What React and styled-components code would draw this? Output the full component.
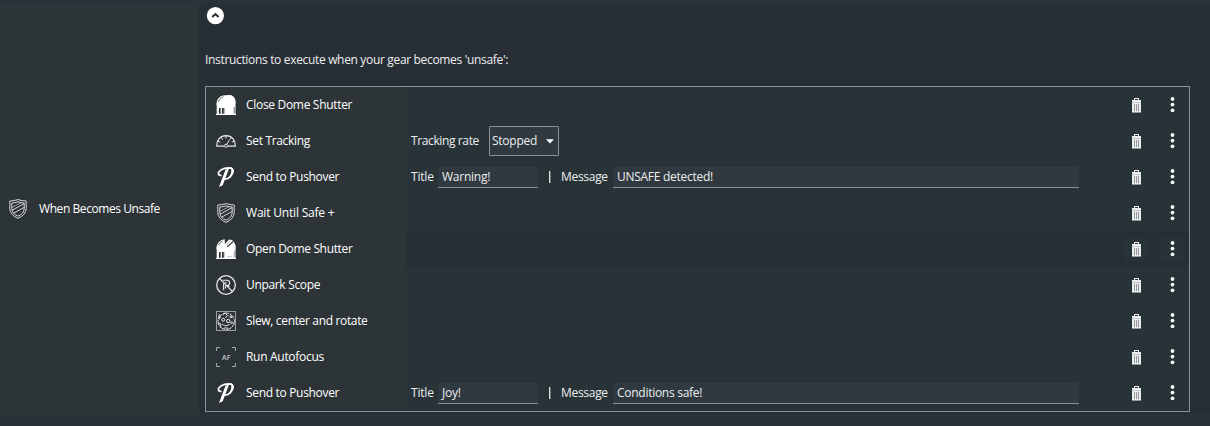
import React from 'react';
import styled, { createGlobalStyle } from 'styled-components';

const GlobalStyle = createGlobalStyle`
  * { box-sizing: border-box; }
  body {
    margin: 0;
    background: #283339;
    color: #fff;
    font: 12px/16px "Open Sans", "Noto Sans", sans-serif;
    overflow: hidden;
  }
`;

const Page = styled.div`
  width: 1210px;
  height: 426px;
  padding: 4px 0 12px;
  display: flex;
  background: #273239;
`;
const Trigger = styled.aside`
  width: 199px;
  flex: none;
  display: flex;
  align-items: center;
  padding: 0 0 0 8px;
  gap: 11px;
  background: #2d3437;
`;
const Content = styled.main`
  flex: 1;
  display: flex;
  flex-direction: column;
  align-items: flex-start;
  padding: 3px 20px 0 6px;
  background: #282e36;
`;
const Collapse = styled.button`
  width: 18px;
  height: 18px;
  margin: 0 0 27px 1px;
  padding: 0;
  border: 0;
  background: none;
  svg { display: block; }
`;
const Text = styled.span`
  display: block;
  flex: none;
  white-space: nowrap;
  color: ${(p) => (p.$soft ? '#eceeef' : '#fff')};
  letter-spacing: ${(p) => p.$ls ?? -0.3}px;
`;
const Intro = styled(Text)`
  margin-bottom: 18px;
`;
const List = styled.section`
  width: 985px;
  height: 326px;
  border: 1px solid #8c9194;
`;
const Row = styled.div`
  height: 36px;
  display: flex;
  background: ${(p) => (p.$dim ? '#282e36' : '#283338')};
`;
const Label = styled.div`
  width: 200px;
  flex: none;
  display: flex;
  align-items: center;
  gap: 10px;
  padding-left: 10px;
  background: #2d3437;
  box-shadow: inset 0 -1px #2a3237;
`;
const Body = styled.div`
  flex: 1;
  display: flex;
  align-items: center;
  padding-left: 5px;
`;
const Fixed = styled.div`
  width: ${(p) => p.$w}px;
  flex: none;
`;
const Field = styled.div`
  width: ${(p) => p.$w}px;
  height: 21px;
  flex: none;
  padding: 2px 4px;
  background: #30393f;
  border-bottom: 1px solid #8c9194;
`;
const Select = styled.div`
  width: 70px;
  height: 30px;
  display: flex;
  align-items: center;
  justify-content: space-between;
  padding: 0 4px 0 2px;
  border: 1px solid #8c9194;
  border-radius: 1px;
  background: #30393f;
`;
const Bar = styled.i`
  width: 1px;
  height: 12px;
  margin: 0 11px 0 11px;
  background: #dfe2e3;
  box-shadow: 1px 0 #6c7377;
`;
const Actions = styled.div`
  width: 65px;
  flex: none;
  display: flex;
  align-items: center;
  gap: 11px;
`;
const ActionButton = styled.button`
  width: 25px;
  height: 24px;
  display: grid;
  place-items: center;
  padding: 0;
  border: 0;
  background: #283338;
  svg { display: block; }
`;
const Icon = styled.svg`
  width: 20px;
  height: 20px;
  flex: none;
  display: block;
  fill: none;
  stroke: #e8eaeb;
`;

const Shield = () => (
  <Icon viewBox="0 0 20 20" strokeWidth=".9" aria-hidden>
    <path d="M10 .6Q14 1.8 18.2 2V9.5Q18 16 10 19.4Q2 16 1.8 9.5V2Q6 1.8 10 .6Z" />
    <path d="M10 2.8Q13 3.9 16.2 4V9.5Q16 14.7 10 17.2Q4 14.7 3.8 9.5V4Q7 3.9 10 2.8ZM4.2 11.2L16.2 4.6M5.3 14.4L16.2 8.4" />
    <path strokeWidth=".6" d="M3.9 8.6L13.2 3.5" />
  </Icon>
);
const ClosedDome = () => (
  <Icon viewBox="0 0 20 20" aria-hidden>
    <path fill="#fff" stroke="none" d="M0 19H.7V10H.4C.4 4 4 .3 9 .2L14 0C18 .6 19.8 4 19.8 8.5H19.5V19H20V20H0Z" />
    <path stroke="#2d3437" strokeWidth=".7" d="M2.2 7Q3.4 3 7.6 1.7M18.2 12V18.5" />
    <path fill="#2d3437" stroke="none" d="M3 13H4.7V18.8H3ZM6 13H7.8V18.8H6Z" />
    <path fill="#9aa1a4" stroke="none" d="M1.5 16H2.5V17.5H1.5ZM4.7 13H5.2V18.8H4.7ZM8.2 13H9V18.8H8.2Z" />
  </Icon>
);
const OpenDome = () => (
  <Icon viewBox="0 0 20 20" aria-hidden>
    <path fill="#fff" stroke="none" d="M0 19H.7V10H.3C.6 5.5 2.5 2.2 6.5 .8L8.7 .3L8.9 5L13 .5L16 1C18.8 3.4 19.8 6 19.8 9.5H19.5V19H20V20H0Z" />
    <path stroke="#2d3437" strokeWidth=".7" d="M2.3 6.2Q3.6 3.2 6.8 2" />
    <path stroke="#2d3437" strokeWidth="1.2" d="M11.3 7.8L17.4 2.4" />
    <path stroke="#8b9295" strokeWidth=".7" d="M9.9 6.4L14.6 1.6" />
    <path fill="#2d3437" stroke="none" d="M3 13H4.7V18.7H3ZM6 13H7.8V18.7H6ZM17.9 12H18.4V18H17.9Z" />
    <path stroke="#a9afb1" strokeWidth=".6" d="M11 17.6H16M8.5 13V18.7" />
  </Icon>
);
const Gauge = () => (
  <Icon viewBox="0 0 20 20" aria-hidden>
    <path strokeWidth="1.2" d="M8.4 15.2H.8C.2 9 4.5 4.7 10 4.7S19.8 9 19.2 15.2H11.6" />
    <circle cx="10" cy="14.7" r="1.5" />
    <path d="M10.8 13.3L13.6 8.6M10 5V7.5M5.2 6.5L6.7 8.7M15.2 6.5L14.3 8.2M2 10.3L4.3 11.3M18 10.3L15.8 11.3" />
  </Icon>
);
const Pushover = () => (
  <Icon viewBox="0 0 20 20" aria-hidden>
    <path fill="#fff" stroke="none" d="M9.6 2.5L13 1.8L6.7 18.3L3 20Z" />
    <path stroke="#fff" strokeWidth="1.7" d="M5.5 8.3C1.4 9 1.7 5.5 4.7 3.2C7.5 1.1 11 .9 13.4 .9C16.5 1 17.5 3 16.6 5.7C15.3 9.6 11.8 12 8.3 12.2" />
    <path fill="#fff" stroke="none" d="M14.2 .2C18.5 .8 18.3 4.5 16.8 7.2Q15 10.3 11.5 12C14 9.5 17 3.5 14.2 .2Z" />
  </Icon>
);
const Unpark = () => (
  <Icon viewBox="0 0 20 20" aria-hidden>
    <circle cx="10" cy="10" r="9.3" strokeWidth="1.3" />
    <path strokeWidth="1.3" d="M3.4 3.4L16.6 16.6" />
    <path strokeWidth="1.1" d="M6.5 5.3H11Q13.8 5.6 13.7 8T11 10.5H9.7M7.6 8.2V15.2M9.5 11V13.5M8.7 7.7H10.7M12.3 10.3L13 12" />
  </Icon>
);
const Slew = () => (
  <Icon viewBox="0 0 20 20" aria-hidden>
    <rect x=".5" y=".5" width="19" height="19" stroke="#9ca2a4" />
    <circle cx="10.2" cy="10.3" r="8.2" strokeDasharray="6 1" />
    <path d="M6.7 3.8L9.2 2L11.5 4.7L9.3 6.7M3.2 3.2V8.5M2 6H5M2.2 12.2L5 13L4.2 16.3" />
    <circle cx="7.2" cy="8.7" r="1.5" />
    <circle cx="12.2" cy="10" r="1.7" />
    <circle cx="15" cy="6" r=".9" />
    <circle cx="15.6" cy="11.7" r=".9" />
    <path strokeWidth=".9" d="M6.2 13.5Q9.8 16 13.7 13.5M8 17H12M12.5 4.7L13.5 5.6" />
  </Icon>
);
const AfText = styled.text`
  font: 600 7px "Open Sans", sans-serif;
  fill: #c5c9ca;
  stroke: none;
`;
const Autofocus = () => (
  <Icon viewBox="0 0 20 20" aria-hidden>
    <path stroke="#a6abad" d="M.5 4V.5H4M16 .5H19.5V4M19.5 16V19.5H16M4 19.5H.5V16" />
    <AfText x="6" y="12.5" textLength="8.5">AF</AfText>
  </Icon>
);
const Trash = () => (
  <svg width="9" height="16" viewBox="0 0 9 16" aria-label="Delete">
    <path fill="#eceeee" d="M2 1H7V3H6V2H3V3H2ZM0 3H9V5H0ZM0 6H9V15H0Z" />
    <path fill="#c3c7c8" d="M0 5H9V6H0Z" />
    <path fill="#92999c" d="M2 7H3V14H2ZM4 7H5V14H4ZM6 7H7V14H6ZM0 15H9V16H0Z" />
  </svg>
);
const Dots = () => (
  <svg width="5" height="16" viewBox="0 0 5 16" fill="#f3f4f4" aria-label="More">
    <circle cx="2.5" cy="2" r="1.9" />
    <circle cx="2.5" cy="7.6" r="1.9" />
    <circle cx="2.5" cy="13.3" r="1.9" />
  </svg>
);

const TrackingRate = () => (
  <>
    <Fixed $w={78}><Text $soft $ls={-0.38}>Tracking rate</Text></Fixed>
    <Select>
      <Text $soft $ls={-0.25}>Stopped</Text>
      <svg width="8" height="5" viewBox="0 0 8 5" fill="#fff"><path d="M0 .3H8L4 4.6Z" /></svg>
    </Select>
  </>
);
const Notification = ({ title, message }) => (
  <>
    <Fixed $w={27}><Text $soft $ls={-0.2}>Title</Text></Fixed>
    <Field $w={100}><Text $soft $ls={-0.25}>{title}</Text></Field>
    <Bar />
    <Fixed $w={52}><Text $soft>Message</Text></Fixed>
    <Field $w={466}><Text $soft $ls={-0.27}>{message}</Text></Field>
  </>
);

const rows = [
  { icon: ClosedDome, name: 'Close Dome Shutter', ls: -0.31 },
  { icon: Gauge, name: 'Set Tracking', ls: -0.33, body: <TrackingRate /> },
  { icon: Pushover, name: 'Send to Pushover', ls: -0.32, body: <Notification title="Warning!" message="UNSAFE detected!" /> },
  { icon: Shield, name: 'Wait Until Safe +', ls: -0.19 },
  { icon: OpenDome, name: 'Open Dome Shutter', ls: -0.34, dim: true },
  { icon: Unpark, name: 'Unpark Scope', ls: -0.33 },
  { icon: Slew, name: 'Slew, center and rotate', ls: -0.34 },
  { icon: Autofocus, name: 'Run Autofocus', ls: -0.3 },
  { icon: Pushover, name: 'Send to Pushover', ls: -0.32, body: <Notification title="Joy!" message="Conditions safe!" /> },
];

export default function App() {
  return (
    <>
      <GlobalStyle />
      <Page>
        <Trigger>
          <Shield />
          <Text $ls={-0.43}>When Becomes Unsafe</Text>
        </Trigger>
        <Content>
          <Collapse aria-label="Collapse">
            <svg width="18" height="18" viewBox="0 0 18 18">
              <circle cx="9.4" cy="8.6" r="8.6" fill="#fff" />
              <path d="M6.2 10L9.4 7L12.6 10" fill="none" stroke="#282e36" strokeWidth="2" />
            </svg>
          </Collapse>
          <Intro $soft $ls={-0.33}>Instructions to execute when your gear becomes 'unsafe':</Intro>
          <List>
            {rows.map(({ icon: RowIcon, name, ls, body, dim }, i) => (
              <Row key={i} $dim={dim}>
                <Label>
                  <RowIcon />
                  <Text $ls={ls}>{name}</Text>
                </Label>
                <Body>{body}</Body>
                <Actions>
                  <ActionButton><Trash /></ActionButton>
                  <ActionButton><Dots /></ActionButton>
                </Actions>
              </Row>
            ))}
          </List>
        </Content>
      </Page>
    </>
  );
}
